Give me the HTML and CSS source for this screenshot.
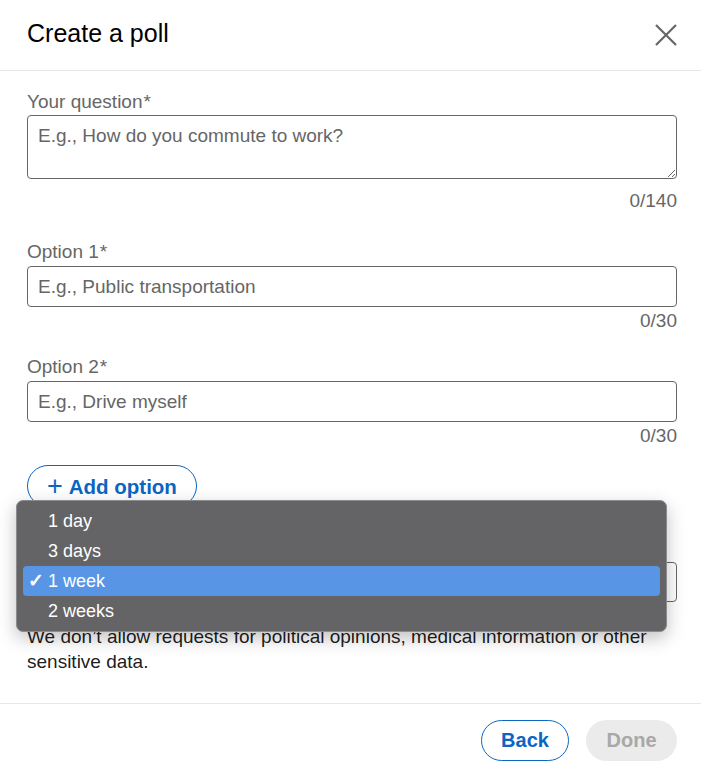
FILE: index.html
```html
<!DOCTYPE html>
<html lang="en">
<head>
    <meta charset="UTF-8">
    <meta name="viewport" content="width=device-width, initial-scale=1.0">
    <title>Create a poll</title>
    <link rel="stylesheet" href="styles.css">
</head>
<body>
    <div class="modal">
        <!-- Header -->
        <div class="modal-header">
            <h1>Create a poll</h1>
            <button class="close-btn" aria-label="Close">
                <svg width="22" height="22" viewBox="0 0 22 22">
                    <path d="M1 1 L21 21 M21 1 L1 21" stroke="#666" stroke-width="2.2" fill="none"/>
                </svg>
            </button>
        </div>

        <!-- Form -->
        <div class="modal-body">
            <div class="field">
                <label class="q-label">Your question<span class="req">*</span></label>
                <textarea class="box area" placeholder="E.g., How do you commute to work?"></textarea>
                <div class="counter counter-area">0/140</div>
            </div>

            <div class="field">
                <label>Option 1<span class="req">*</span></label>
                <input type="text" class="box" placeholder="E.g., Public transportation">
                <div class="counter">0/30</div>
            </div>

            <div class="field">
                <label>Option 2<span class="req">*</span></label>
                <input type="text" class="box" placeholder="E.g., Drive myself">
                <div class="counter">0/30</div>
            </div>

            <button class="add-btn"><span class="plus">+</span> Add option</button>

            <div class="field duration">
                <label>Poll duration</label>
                <div class="box select-box">1 week</div>

                <!-- Open dropdown menu -->
                <ul class="menu">
                    <li>1 day</li>
                    <li>3 days</li>
                    <li class="selected"><span class="check">&#10003;</span>1 week</li>
                    <li>2 weeks</li>
                </ul>
            </div>

            <p class="note">We don’t allow requests for political opinions, medical information or other sensitive data.</p>
        </div>

        <!-- Footer -->
        <div class="modal-footer">
            <button class="btn btn-back">Back</button>
            <button class="btn btn-done">Done</button>
        </div>
    </div>
</body>
</html>
```

FILE: styles.css
```css
body {
    margin: 0;
    padding: 0;
    font-family: "Liberation Sans", Arial, sans-serif;
    background: #fff;
    color: rgba(0, 0, 0, 0.9);
}

.modal {
    width: 701px;
    height: 771px;
    display: flex;
    flex-direction: column;
    overflow: hidden;
}

.modal-header {
    height: 71px;
    display: flex;
    align-items: center;
    justify-content: space-between;
    padding: 0 24px 0 27px;
    border-bottom: 1px solid #e6e6e6;
    box-sizing: border-box;
}

h1 {
    margin: 0;
    font-size: 25px;
    font-weight: normal;
    color: #000;
    margin-top: -4px;
}

.close-btn {
    background: none;
    border: none;
    padding: 0;
    width: 22px;
    height: 22px;
    margin-top: 0;
    cursor: pointer;
}

.modal-body {
    flex: 1;
    padding: 20px 24px 0 27px;
}

.field {
    display: flex;
    flex-direction: column;
}

label {
    font-size: 19px;
    line-height: 22px;
    color: #666;
    margin-bottom: 3px;
}

.q-label {
    margin-bottom: 2px;
}

.req {
    margin-left: 1px;
}

.box {
    display: block;
    width: 100%;
    box-sizing: border-box;
    border: 1px solid #666;
    border-radius: 4px;
    font-family: "Liberation Sans", Arial, sans-serif;
    font-size: 19px;
    padding: 0 10px;
    height: 41px;
    outline: none;
}

.box::placeholder {
    color: #666;
}

.area {
    height: 64px;
    padding: 9px 10px;
    resize: vertical;
}

.counter {
    text-align: right;
    font-size: 19px;
    line-height: 22px;
    color: #666;
    margin-top: 3px;
    margin-bottom: 24px;
}

.counter-area {
    margin-top: 11px;
    margin-bottom: 29px;
}

.add-btn {
    height: 42px;
    padding: 0 19px 0 19px;
    border: 1px solid #0a66c2;
    border-radius: 21px;
    background: #fff;
    color: #0a66c2;
    font-family: "Liberation Sans", Arial, sans-serif;
    font-size: 20.5px;
    font-weight: bold;
    margin-top: -6px;
    cursor: pointer;
}

.plus {
    font-size: 27px;
    font-weight: normal;
    vertical-align: -1px;
    margin-right: 1px;
}

.duration {
    position: relative;
    margin-top: 30px;
}

.select-box {
    height: 40px;
    line-height: 38px;
}

.menu {
    position: absolute;
    left: -11px;
    top: -37px;
    width: 651px;
    box-sizing: border-box;
    margin: 0;
    padding: 5px 6px;
    list-style: none;
    background: #646365;
    border: 1px solid #8c8c8e;
    border-radius: 7px;
    box-shadow: 0 6px 18px rgba(0, 0, 0, 0.25);
}

.menu li {
    position: relative;
    height: 30px;
    line-height: 30px;
    padding-left: 25px;
    font-size: 18px;
    color: #fff;
    border-radius: 4px;
}

.menu li.selected {
    background: #5896e5;
}

.check {
    position: absolute;
    left: 5px;
    font-size: 19px;
    font-weight: bold;
}

.note {
    margin: 22px 0 0 0;
    font-size: 19px;
    line-height: 25px;
    color: rgba(0, 0, 0, 0.9);
}

.modal-footer {
    height: 68px;
    box-sizing: border-box;
    border-top: 1px solid #e6e6e6;
    display: flex;
    justify-content: flex-end;
    align-items: flex-start;
    gap: 17px;
    padding: 16px 24px 0 27px;
}

.btn {
    height: 41px;
    border-radius: 21px;
    font-family: "Liberation Sans", Arial, sans-serif;
    font-size: 20px;
    font-weight: bold;
    padding: 0;
    cursor: pointer;
}

.btn-back {
    width: 88px;
    background: #fff;
    border: 1px solid #0a66c2;
    color: #0a66c2;
}

.btn-done {
    width: 91px;
    background: #ebebeb;
    border: none;
    color: #a8a8a8;
}
```
